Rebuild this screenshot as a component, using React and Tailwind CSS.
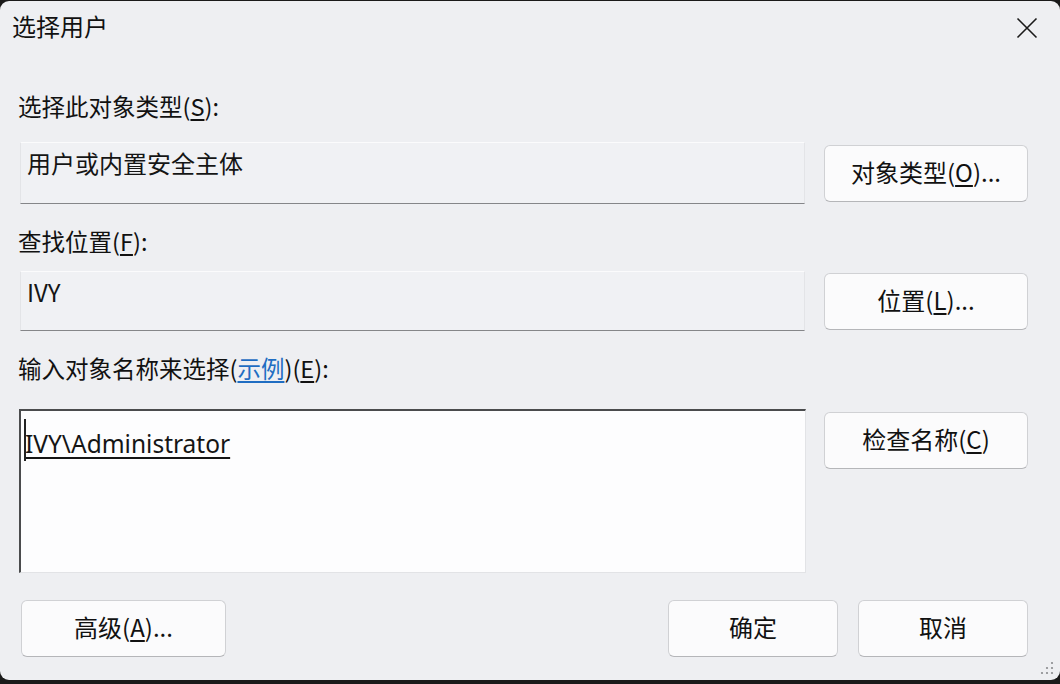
import React from "react";

const FONT = { fontFamily: '"Noto Sans CJK SC", "Noto Sans", sans-serif' };

function Btn({ children, className = "" }) {
  return (
    <div
      className={
        "flex items-center justify-center h-[57px] pb-[3px] rounded-[6px] bg-[#fbfbfc] border border-[#d0d1d4] border-b-[#b5b6b9] text-[24px] text-[#111] shrink-0 " +
        className
      }
    >
      {children}
    </div>
  );
}

function U({ children }) {
  return <span className="underline underline-offset-[3px] decoration-[1.5px]">{children}</span>;
}

function Field({ children, h }) {
  return (
    <div
      className={
        "w-[786px] ml-[2px] bg-[#f0f1f4] border-t border-t-[#fbfbfc] border-x border-x-[#e3e4e7] border-b border-b-[#858689] px-[6px] pt-[4px] text-[24px] leading-[32px] text-[#151515] " +
        h
      }
    >
      {children}
    </div>
  );
}

export default function App() {
  return (
    <div className="w-[1060px] h-[684px] bg-[#1a1a1a] pt-[1px] overflow-hidden" style={FONT}>
      <div className="relative h-[679px] bg-[#eeeff2] rounded-[9px] flex flex-col">
        <div className="h-[51px] flex items-center justify-between pl-[12px] pr-[22px]">
          <span className="text-[24px] text-[#111] mt-[-2px]">选择用户</span>
          <svg width="22" height="22" viewBox="0 0 22 22" className="mt-[2px]">
            <path d="M1.5 1.5 L20.5 20.5 M20.5 1.5 L1.5 20.5" stroke="#1a1a1a" strokeWidth="1.6" fill="none" />
          </svg>
        </div>
        <div className="pl-[18px] pr-[32px] flex flex-col">
          <div className="mt-[40px] h-[28px] leading-[28px] text-[23.5px] text-[#111]">
            选择此对象类型(<U>S</U>):
          </div>
          <div className="mt-[22px] flex items-center gap-[19px] h-[62px]">
            <Field h="h-[62px]">用户或内置安全主体</Field>
            <Btn className="w-[204px]">
              对象类型(<U>O</U>)...
            </Btn>
          </div>
          <div className="mt-[23px] h-[28px] leading-[28px] text-[23.5px] text-[#111]">
            查找位置(<U>F</U>):
          </div>
          <div className="mt-[16px] flex items-center gap-[19px] h-[60px]">
            <Field h="h-[60px]">IVY</Field>
            <Btn className="w-[204px]">
              位置(<U>L</U>)...
            </Btn>
          </div>
          <div className="mt-[23px] h-[28px] leading-[28px] text-[23.5px] text-[#111]">
            输入对象名称来选择(<span className="text-[#1f6dc2] underline underline-offset-[3px]">示例</span>)(<U>E</U>):
          </div>
          <div className="mt-[27px] flex items-start gap-[18px] h-[164px]">
            <div className="relative w-[788px] ml-[1px] h-[164px] bg-[#fdfdfe] border-t-2 border-t-[#4a4b4d] border-l-2 border-l-[#4a4b4d] border-r border-r-[#e2e3e6] border-b border-b-[#e2e3e6] pl-[4px] pt-[17px]">
              <div className="absolute left-[3px] top-[8px] w-[2px] h-[42px] bg-[#222]" />
              <span
                className="text-[24.5px] leading-[32px] text-[#151515] underline underline-offset-[4px] decoration-[1.5px]"
                style={{ fontFamily: '"Noto Sans", "Noto Sans CJK SC", sans-serif' }}
              >
                IVY\Administrator
              </span>
            </div>
            <Btn className="w-[204px] mt-[3px]">
              检查名称(<U>C</U>)
            </Btn>
          </div>
          <div className="mt-[27px] flex items-center">
            <Btn className="w-[205px] ml-[3px]">
              高级(<U>A</U>)...
            </Btn>
            <div className="flex-1" />
            <Btn className="w-[170px]">确定</Btn>
            <Btn className="w-[170px] ml-[20px]">取消</Btn>
          </div>
        </div>
        <svg width="16" height="16" viewBox="0 0 16 16" className="absolute right-[5px] bottom-[4px]">
          <g fill="#8a8b8e">
            <circle cx="13" cy="3" r="1.1" />
            <circle cx="13" cy="8" r="1.1" />
            <circle cx="8" cy="8" r="1.1" />
            <circle cx="13" cy="13" r="1.1" />
            <circle cx="8" cy="13" r="1.1" />
            <circle cx="3" cy="13" r="1.1" />
          </g>
        </svg>
      </div>
    </div>
  );
}
